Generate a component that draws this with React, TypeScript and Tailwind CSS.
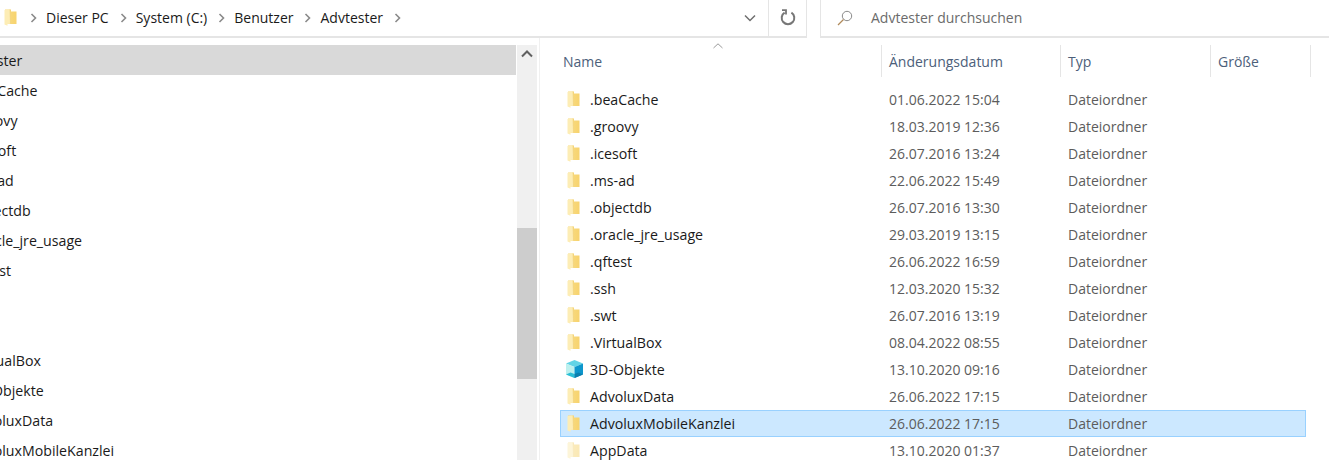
import React from "react";

const Folder = ({ faded = false }: { faded?: boolean }) => (
  <svg width="13" height="17" viewBox="0 0 13 17" className={faded ? "opacity-50" : ""}>
    <defs>
      <linearGradient id="fg" x1="0" x2="1" y1="0" y2="0">
        <stop offset="0" stopColor="#f8dc85" />
        <stop offset="1" stopColor="#f7d36e" />
      </linearGradient>
    </defs>
    <path d="M1 0.5 L7 0.5 L7 2.5 L12.5 2.5 L12.5 15 L5 15 L1 15 Z" fill="url(#fg)" />
    <path d="M0.5 1 L6 0.5 L6.5 14.8 L3.5 15 L3.5 16.8 L0.5 15.5 Z" fill="#fdedb5" />
    <path d="M6 0.5 L6.5 14.8" stroke="#f0cf76" strokeWidth="0.6" fill="none" />
  </svg>
);

const Cube = () => (
  <svg width="19" height="20" viewBox="0 0 19 20">
    <path d="M9.5 1 L18 4.5 L9.5 8 L1 4.5 Z" fill="#62d4e6" />
    <path d="M1 4.5 L9.5 8 V19 L1 15.5 Z" fill="#bdf0ee" />
    <path d="M9.5 8 L18 4.5 V15.5 L9.5 19 Z" fill="#0d96cc" />
    <path d="M1 15.5 L5.5 13.5 L9.5 15 V19 Z" fill="#2bbfd6" />
    <path d="M18 15.5 L13.5 13.5 L9.5 15 V19 Z" fill="#0a7fae" />
  </svg>
);

const Chevron = () => (
  <svg width="7" height="10" viewBox="0 0 7 10">
    <path d="M1.5 1 L5.5 5 L1.5 9" fill="none" stroke="#8a8a8a" strokeWidth="1.6" />
  </svg>
);

const crumbs = ["Dieser PC", "System (C:)", "Benutzer", "Advtester"];

const nav = [
  "Advtester",
  ".beaCache",
  ".groovy",
  ".icesoft",
  ".ms-ad",
  ".objectdb",
  ".oracle_jre_usage",
  ".qftest",
  ".ssh",
  ".swt",
  ".VirtualBox",
  "3D-Objekte",
  "AdvoluxData",
  "AdvoluxMobileKanzlei",
];

const files: [string, string][] = [
  [".beaCache", "01.06.2022 15:04"],
  [".groovy", "18.03.2019 12:36"],
  [".icesoft", "26.07.2016 13:24"],
  [".ms-ad", "22.06.2022 15:49"],
  [".objectdb", "26.07.2016 13:30"],
  [".oracle_jre_usage", "29.03.2019 13:15"],
  [".qftest", "26.06.2022 16:59"],
  [".ssh", "12.03.2020 15:32"],
  [".swt", "26.07.2016 13:19"],
  [".VirtualBox", "08.04.2022 08:55"],
  ["3D-Objekte", "13.10.2020 09:16"],
  ["AdvoluxData", "26.06.2022 17:15"],
  ["AdvoluxMobileKanzlei", "26.06.2022 17:15"],
  ["AppData", "13.10.2020 01:37"],
];

export default function App() {
  return (
    <div className="w-[1329px] h-[460px] overflow-hidden bg-white font-['Open_Sans',sans-serif] text-[14px] text-[#1a1a1a] flex flex-col">
      {/* top bar */}
      <div className="h-[38px] shrink-0 flex">
        <div className="w-[768px] shrink-0 border-b-2 border-[#e5e5e5] flex items-center pl-[4px] pb-[1px]">
          <Folder />
          <div className="ml-[13px] flex items-center">
            {crumbs.map((c) => (
              <div key={c} className="flex items-center">
                <Chevron />
                <span className="ml-[9px] mr-[11px] whitespace-nowrap">{c}</span>
              </div>
            ))}
            <Chevron />
          </div>
          <div className="ml-auto mr-[12px]">
            <svg width="12" height="8" viewBox="0 0 12 8">
              <path d="M1 1.5 L6 6.5 L11 1.5" fill="none" stroke="#6f6f6f" strokeWidth="1.5" />
            </svg>
          </div>
        </div>
        <div className="w-[39px] shrink-0 border-l border-r border-b-2 border-[#e5e5e5] flex items-center justify-center pb-[2px]">
          <svg width="16" height="17" viewBox="0 0 16 17">
            <path d="M4.6 3.6 A6.3 6.3 0 1 0 11.4 3.6" fill="none" stroke="#777777" strokeWidth="2" />
            <path d="M2 1.2 L6 1.2 L6 5.6" fill="none" stroke="#777777" strokeWidth="1.8" />
          </svg>
        </div>
        <div className="w-[13px] shrink-0"></div>
        <div className="flex-1 border-l border-b-2 border-[#e5e5e5] flex items-center pl-[16px] pb-[1px] text-[#6b6b6b]">
          <svg width="16" height="16" viewBox="0 0 16 16">
            <circle cx="10" cy="6" r="4.7" fill="none" stroke="#8a8a8a" strokeWidth="1" />
            <path d="M6.5 9.5 L1 15" stroke="#b08a5a" strokeWidth="1.2" />
          </svg>
          <span className="ml-[18px]">Advtester durchsuchen</span>
        </div>
      </div>

      {/* body */}
      <div className="flex-1 flex min-h-0">
        {/* navigation */}
        <div className="w-[516px] shrink-0 pt-[7px] overflow-hidden">
          {nav.map((n, i) => (
            <div
              key={n}
              className={`h-[30px] flex items-center whitespace-nowrap ${i === 0 ? "bg-[#d9d9d9]" : ""}`}
            >
              <span className={`text-[14.2px] pt-[2px] ${i === 0 ? "-ml-[41px]" : "-ml-[31px]"}`}>{n}</span>
            </div>
          ))}
        </div>
        <div className="w-px shrink-0"></div>
        {/* scrollbar */}
        <div className="w-[20px] shrink-0 bg-[#f0f0f0] mt-[7px] flex flex-col items-center">
          <svg width="12" height="8" viewBox="0 0 12 8" className="mt-[5px]">
            <path d="M1 6.5 L6 1.5 L11 6.5" fill="none" stroke="#606060" strokeWidth="2" />
          </svg>
          <div className="w-full h-[151px] bg-[#cdcdcd] mt-[170px]"></div>
        </div>
        <div className="w-[2px] shrink-0"></div>
        <div className="w-px shrink-0 bg-[#f0f0f0]"></div>
        {/* list */}
        <div className="flex-1 min-w-0 pt-[7px]">
          <div className="h-[32px] flex items-stretch text-[#4c607a]">
            <div className="w-[342px] relative pl-[23px] flex items-center border-r border-[#e5e5e5]">
              <span>Name</span>
              <svg width="10" height="6" viewBox="0 0 10 6" className="absolute left-[173px] -top-[2px]">
                <path d="M0.5 5 L5 0.8 L9.5 5" fill="none" stroke="#9a9a9a" strokeWidth="1" />
              </svg>
            </div>
            <div className="w-[179px] pl-[7px] flex items-center border-r border-[#e5e5e5]">Änderungsdatum</div>
            <div className="w-[150px] pl-[7px] flex items-center border-r border-[#e5e5e5]">Typ</div>
            <div className="w-[100px] pl-[7px] flex items-center border-r border-[#e5e5e5]">Größe</div>
          </div>
          <div className="pt-[9px] pl-[20px]">
            {files.map(([name, date]) => {
              const sel = name === "AdvoluxMobileKanzlei";
              const app = name === "AppData";
              const cube = name === "3D-Objekte";
              return (
                <div
                  key={name}
                  className={`h-[27px] w-[746px] flex items-center border ${
                    sel ? "bg-[#cce8ff] border-[#99d1ff]" : "border-transparent"
                  }`}
                >
                  <div className={`w-[29px] shrink-0 flex -mt-[1px] ${cube ? "pl-[4px]" : "pl-[6px]"}`}>
                    {cube ? <Cube /> : <Folder faded={app} />}
                  </div>
                  <div className="w-[299px] shrink-0 whitespace-nowrap text-[14.2px]">{name}</div>
                  <div className="w-[179px] shrink-0 text-[#5c5c5c]">{date}</div>
                  <div className="text-[#5c5c5c]">Dateiordner</div>
                </div>
              );
            })}
          </div>
        </div>
      </div>
    </div>
  );
}
